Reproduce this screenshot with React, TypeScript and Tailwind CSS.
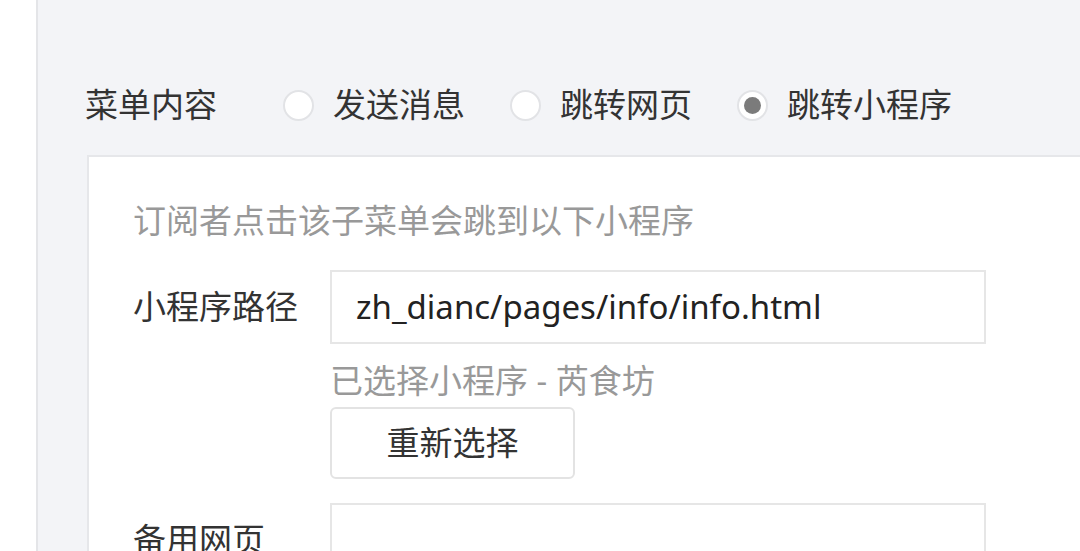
import React from 'react';

const font = { fontFamily: '"Noto Sans", "Noto Sans CJK SC", sans-serif' };

function Radio({ checked, label }: { checked?: boolean; label: string }) {
  return (
    <div className="flex items-center gap-[19px]">
      <div className="w-[31px] h-[31px] rounded-full border-2 border-[#e2e3e6] bg-white flex items-center justify-center">
        {checked && <div className="w-[17px] h-[17px] rounded-full bg-[#7b7b7b]" />}
      </div>
      <span className="text-[33px] leading-[40px] text-[#333]">{label}</span>
    </div>
  );
}

export default function App() {
  return (
    <div className="w-[1080px] h-[551px] overflow-hidden flex bg-white" style={font}>
      <div className="w-[38px] shrink-0 bg-white border-r-2 border-[#e4e5e8]" />
      <div className="flex-1 bg-[#f3f4f7] pt-[85px]">
        <div className="flex items-center h-[40px] pl-[47px]">
          <span className="w-[198px] text-[33px] leading-[40px] text-[#333]">菜单内容</span>
          <div className="flex items-center gap-[45px]">
            <Radio label="发送消息" />
            <Radio label="跳转网页" />
            <Radio checked label="跳转小程序" />
          </div>
        </div>

        <div className="mt-[30px] ml-[49px] bg-white border-t-2 border-l-2 border-[#e6e7ea] pl-[44px] pt-[44px] h-[420px]">
          <div className="text-[33px] leading-[40px] text-[#999]">订阅者点击该子菜单会跳到以下小程序</div>

          <div className="mt-[29px] flex items-center">
            <span className="w-[197px] text-[33px] leading-[40px] text-[#333]">小程序路径</span>
            <div className="w-[656px] h-[74px] border-2 border-[#e6e6e6] flex items-center pl-[24px] text-[33px] text-[#222]">
              zh_dianc/pages/info/info.html
            </div>
          </div>

          <div className="ml-[197px] mt-[17px] text-[33px] leading-[40px] text-[#999]">已选择小程序 - 芮食坊</div>
          <button className="ml-[197px] mt-[6px] w-[245px] h-[72px] border-2 border-[#e3e3e3] rounded-[6px] bg-white text-[33px] text-[#333] flex items-center justify-center">
            重新选择
          </button>

          <div className="mt-[24px] flex items-center">
            <span className="w-[197px] text-[33px] leading-[40px] text-[#333]">备用网页</span>
            <div className="w-[656px] h-[74px] border-2 border-[#e6e6e6]" />
          </div>
        </div>
      </div>
    </div>
  );
}
